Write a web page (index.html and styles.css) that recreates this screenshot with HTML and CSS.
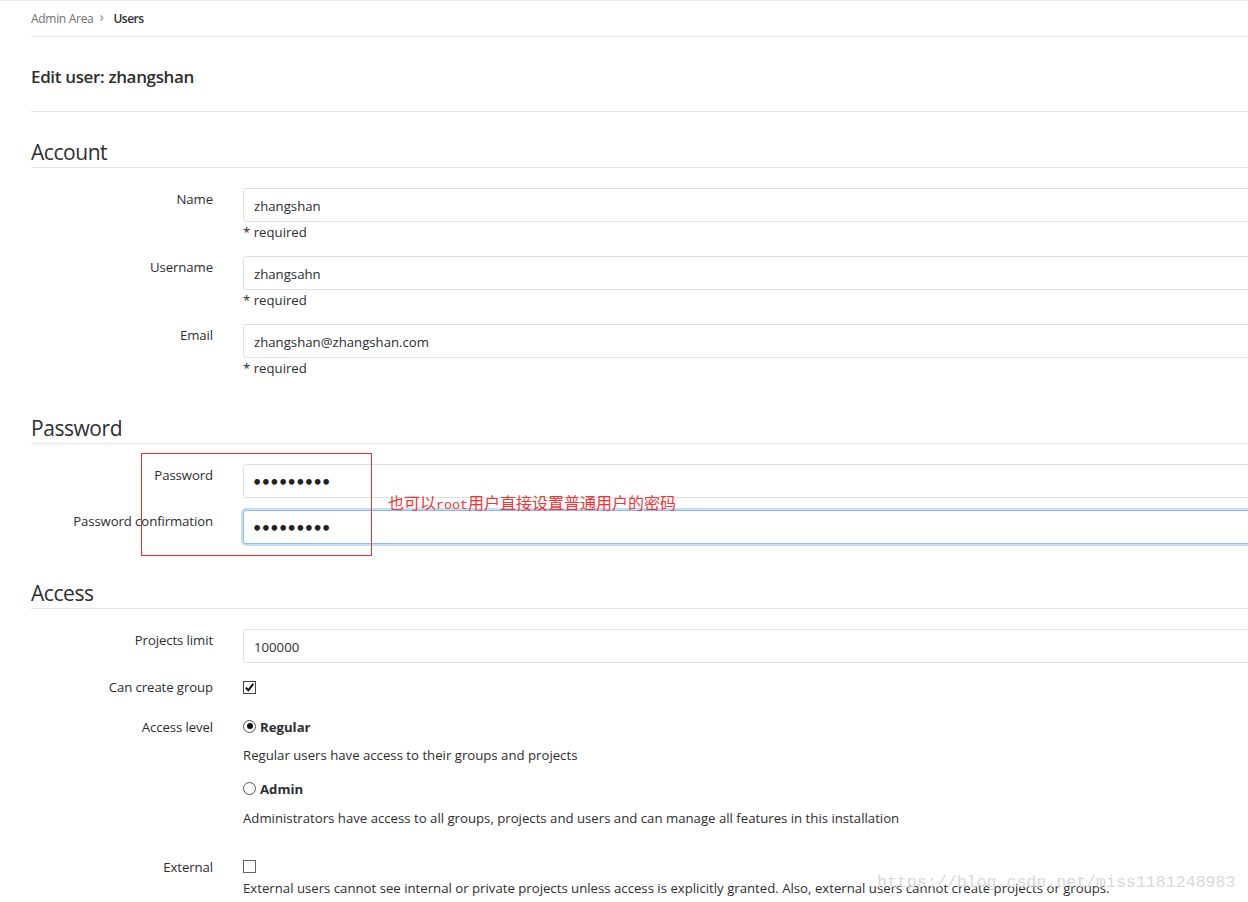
FILE: index.html
```html
<!DOCTYPE html>
<html lang="en">
<head>
<meta charset="utf-8">
<title>Edit user · Admin Area</title>
<link rel="stylesheet" href="styles.css">
</head>
<body>
<div class="page">
  <nav class="breadcrumb">
    <span class="crumb">Admin Area</span>
    <svg class="crumb-sep" width="8" height="8" viewBox="0 0 8 8"><path d="M2.5 1.5 L5 4 L2.5 6.5" fill="none" stroke="#909090" stroke-width="1.1"/></svg>
    <span class="crumb-current">Users</span>
  </nav>
  <h3 class="page-title">Edit user: zhangshan</h3>

  <form class="user-form">
    <section class="section section-first">
      <div class="legend">Account</div>
      <div class="form-group">
        <label class="control-label">Name</label>
        <div class="control">
          <input class="form-control" type="text" value="zhangshan">
          <div class="help">* required</div>
        </div>
      </div>
      <div class="form-group">
        <label class="control-label">Username</label>
        <div class="control">
          <input class="form-control" type="text" value="zhangsahn">
          <div class="help">* required</div>
        </div>
      </div>
      <div class="form-group">
        <label class="control-label">Email</label>
        <div class="control">
          <input class="form-control" type="text" value="zhangshan@zhangshan.com">
          <div class="help">* required</div>
        </div>
      </div>
    </section>

    <section class="section">
      <div class="legend">Password</div>
      <div class="form-group group-tight">
        <label class="control-label">Password</label>
        <div class="control">
          <input class="form-control password" type="password" value="123456789">
        </div>
      </div>
      <div class="form-group group-tight">
        <label class="control-label">Password confirmation</label>
        <div class="control">
          <input class="form-control password focused" type="password" value="123456789">
        </div>
      </div>
    </section>

    <section class="section section-access">
      <div class="legend">Access</div>
      <div class="form-group group-projects">
        <label class="control-label">Projects limit</label>
        <div class="control">
          <input class="form-control" type="text" value="100000">
        </div>
      </div>
      <div class="form-group group-check">
        <label class="control-label">Can create group</label>
        <div class="control">
          <div class="line"><span class="checkbox checked"><svg width="11" height="11" viewBox="0 0 11 11"><path d="M1.8 5.6 L4.3 8.3 L9.3 1.8" fill="none" stroke="#111" stroke-width="2"/></svg></span></div>
        </div>
      </div>
      <div class="form-group group-access">
        <label class="control-label">Access level</label>
        <div class="control">
          <div class="line"><span class="radio checked"></span><strong class="option">Regular</strong></div>
          <p class="desc desc-regular">Regular users have access to their groups and projects</p>
          <div class="line line-admin"><span class="radio"></span><strong class="option">Admin</strong></div>
          <p class="desc desc-admin">Administrators have access to all groups, projects and users and can manage all features in this installation</p>
        </div>
      </div>
      <div class="form-group group-external">
        <label class="control-label">External</label>
        <div class="control">
          <div class="line"><span class="checkbox ext"></span></div>
          <p class="desc desc-external">External users cannot see internal or private projects unless access is explicitly granted. Also, external users cannot create projects or groups.</p>
        </div>
      </div>
    </section>
  </form>

  <div class="annot-box"></div>
  <div class="annot-text">也可以<span class="latin">root</span>用户直接设置普通用户的密码</div>
  <div class="watermark">https://blog.csdn.net/miss1181248983</div>
</div>
</body>
</html>
```

FILE: styles.css
```css
html, body {
  margin: 0;
  padding: 0;
  background: #fff;
}
body {
  width: 1248px;
  height: 902px;
  overflow: hidden;
  border-top: 1px solid #ececec;
  box-sizing: border-box;
  font-family: "Open Sans", "Noto Sans", sans-serif;
  font-size: 13.2px;
  color: #2e2e2e;
}
.page {
  position: relative;
  padding-left: 31px;
  height: 100%;
}
.breadcrumb {
  height: 35px;
  border-bottom: 1px solid #e5e5e5;
  display: flex;
  align-items: center;
  font-size: 12px;
  line-height: 18px;
}
.crumb { color: #707070; letter-spacing: -0.3px; }
.crumb-sep { margin: 0 7px 0 5px; position: relative; top: -1px; }
.crumb-current { color: #2e2e2e; font-weight: 600; letter-spacing: -0.5px; }
.page-title {
  margin: 0;
  padding: 28px 0 22px;
  line-height: 24px;
  font-size: 17px;
  font-weight: 600;
  color: #2e2e2e;
  border-bottom: 1px solid #e5e5e5;
  letter-spacing: -0.35px;
}
.user-form { margin: 0; }
.section { display: flow-root; margin-top: 21px; }
.section-first { margin-top: 25px; }
.section-access { margin-top: 22px; }
.legend {
  font-size: 21px;
  line-height: 30px;
  font-weight: 400;
  color: #2e2e2e;
  border-bottom: 1px solid #e5e5e5;
  margin-bottom: 20px;
  letter-spacing: -0.45px;
}
.form-group {
  display: grid;
  grid-template-columns: 182px 1fr;
  column-gap: 30px;
  margin-bottom: 15px;
}
.group-tight { margin-bottom: 12px; }
.group-projects { margin-bottom: 13px; }
.group-check { margin-bottom: 20px; }
.group-access { margin-bottom: 29px; }
.control-label {
  text-align: right;
  padding-top: 2px;
  line-height: 18px;
  color: #2e2e2e;
  white-space: nowrap;
  letter-spacing: -0.1px;
}
.control { min-width: 0; }
.form-control {
  display: block;
  box-sizing: border-box;
  width: 1100px;
  height: 34px;
  margin: 0;
  padding: 1px 10px 0;
  border: 1px solid #e0e0e0;
  border-radius: 3px;
  font-family: "Open Sans", "Noto Sans", sans-serif;
  font-size: 13.2px;
  color: #2e2e2e;
  background: #fff;
  outline: none;
}
.form-control.password {
  font-family: "DejaVu Sans", sans-serif;
  font-weight: 700;
  font-size: 16px;
  letter-spacing: -1.6px;
  color: #222;
  padding: 3px 9px 0 8px;
}
.form-control.focused {
  border-color: #85bdf6;
  box-shadow: 0 0 0 2px #c4def9;
}
.help {
  padding-top: 1px;
  line-height: 18px;
}
.line {
  display: flex;
  align-items: center;
  height: 18px;
  padding-top: 2px;
}
.checkbox {
  box-sizing: border-box;
  width: 13px;
  height: 13px;
  border: 1px solid #444;
  background: #fff;
  display: flex;
  align-items: center;
  justify-content: center;
  position: relative;
}
.checkbox.ext { border-color: #666; top: -1px; }
.radio {
  box-sizing: border-box;
  width: 13px;
  height: 13px;
  border-radius: 50%;
  border: 1px solid #555;
  background: #fff;
  position: relative;
  top: -1px;
}
.radio.checked::after {
  content: "";
  position: absolute;
  left: 2.5px;
  top: 2.5px;
  width: 6px;
  height: 6px;
  border-radius: 50%;
  background: #111;
}
.option {
  margin-left: 4px;
  font-weight: 700;
  color: #2e2e2e;
}
.desc {
  margin: 0;
  line-height: 18px;
}
.desc-regular { margin-top: 10px; }
.line-admin { margin-top: 14px; }
.desc-admin { margin-top: 11px; }
.desc-external { margin-top: 3px; }

.annot-box {
  position: absolute;
  left: 141px;
  top: 452px;
  width: 231px;
  height: 103px;
  box-sizing: border-box;
  border: 1px solid #ff2626;
}
.annot-text {
  position: absolute;
  left: 388px;
  top: 491px;
  font-family: "Noto Sans CJK SC", sans-serif;
  font-size: 16px;
  line-height: 20px;
  color: #f53333;
  white-space: nowrap;
}
.annot-text .latin {
  font-family: "Liberation Mono", monospace;
  font-size: 13.3px;
}
.watermark {
  position: absolute;
  left: 877px;
  top: 871px;
  font-family: "Liberation Mono", monospace;
  font-size: 16.6px;
  line-height: 22px;
  color: #d9d9d9;
  white-space: nowrap;
}
```
